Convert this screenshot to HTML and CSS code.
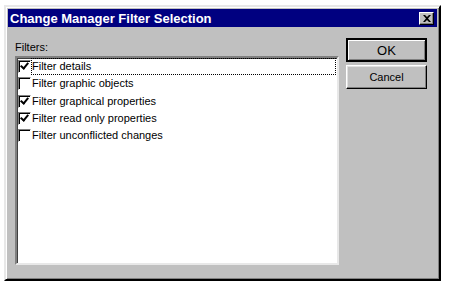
FILE: index.html
```html
<!DOCTYPE html>
<html lang="en">
<head>
    <meta charset="UTF-8">
    <title>Change Manager Filter Selection</title>
    <link rel="stylesheet" href="styles.css">
</head>
<body>
    <div class="dialog">
        <div class="title-bar">
            <span class="title">Change Manager Filter Selection</span>
            <span class="close-button">
                <svg width="8" height="7" viewBox="0 0 8 7"><path d="M0 0h2l2 2 2-2h2L5 3.5 8 7H6L4 5 2 7H0l3-3.5z" fill="#000"/></svg>
            </span>
        </div>
        <div class="dialog-body">
            <div class="filters">
                <div class="label">Filters:</div>
                <div class="list">
                    <div class="item focused"><span class="check checked"></span><span class="text">Filter details</span></div>
                    <div class="item"><span class="check"></span><span class="text">Filter graphic objects</span></div>
                    <div class="item"><span class="check checked"></span><span class="text">Filter graphical properties</span></div>
                    <div class="item"><span class="check checked"></span><span class="text">Filter read only properties</span></div>
                    <div class="item"><span class="check"></span><span class="text">Filter unconflicted changes</span></div>
                </div>
            </div>
            <div class="buttons">
                <button class="button default">OK</button>
                <button class="button">Cancel</button>
            </div>
        </div>
    </div>
</body>
</html>
```

FILE: styles.css
```css
body {
    margin: 0;
    background-color: #ffffff;
    font-family: "Liberation Sans", Arial, sans-serif;
    font-size: 11px;
    color: #000;
}
.dialog {
    margin: 5px 0 0 4px;
    width: 429px;
    height: 268px;
    padding: 2px;
    background-color: #c0c0c0;
    border: 2px solid;
    border-color: #e8e8e8 #000 #000 #e8e8e8;
    box-shadow: inset 1px 1px 0 #fff, inset -1px -1px 0 #808080;
    display: flex;
    flex-direction: column;
}
.title-bar {
    height: 18px;
    background-color: #000080;
    display: flex;
    align-items: center;
    justify-content: space-between;
    padding: 0 3px 0 2px;
}
.title {
    color: #fff;
    font-weight: bold;
    font-size: 13px;
}
.close-button {
    width: 13px;
    height: 11px;
    background-color: #c0c0c0;
    border: 1px solid;
    border-color: #fff #000 #000 #fff;
    box-shadow: inset -1px -1px 0 #808080;
    display: flex;
    align-items: center;
    justify-content: center;
}
.dialog-body {
    flex: 1;
    display: flex;
    gap: 7px;
    padding: 11px 10px 12px 7px;
}
.filters {
    display: flex;
    flex-direction: column;
    padding-top: 2px;
}
.label {
    line-height: 14px;
    margin-bottom: 2px;
}
.list {
    width: 320px;
    height: 205px;
    background-color: #fff;
    border: 2px solid;
    border-color: #808080 #e8e8e8 #e8e8e8 #808080;
    box-shadow: inset 1px 1px 0 #404040;
}
.item {
    height: 17.3px;
    display: flex;
    align-items: center;
}
.check {
    width: 11px;
    height: 11px;
    margin-left: 1px;
    border: 1px solid;
    border-color: #808080 #fff #fff #808080;
    box-shadow: inset 1px 1px 0 #000;
    background-color: #fff;
    position: relative;
}
.check.checked::after {
    content: "";
    position: absolute;
    left: 2px;
    top: 0px;
    width: 3px;
    height: 6px;
    border: solid #000;
    border-width: 0 2px 2px 0;
    transform: translate(1px, 0) rotate(40deg);
}
.text {
    margin-left: 1px;
    padding: 1px 1px 1px 0;
    line-height: 13px;
}
.item.focused .text {
    flex: 1;
    outline: 1px dotted #000;
    outline-offset: 0;
    margin-right: 2px;
}
.buttons {
    display: flex;
    flex-direction: column;
    gap: 3px;
}
.button {
    width: 81px;
    height: 24px;
    font-family: "Liberation Sans", Arial, sans-serif;
    font-size: 11px;
    background-color: #c0c0c0;
    border: 1px solid;
    border-color: #fff #000 #000 #fff;
    box-shadow: inset -1px -1px 0 #808080, inset 1px 1px 0 #e0e0e0;
    padding: 0;
    color: #000;
}
.button.default {
    border: 2px solid #000;
    box-shadow: inset 1px 1px 0 #fff, inset -1px -1px 0 #808080;
    font-size: 13px;
}
```
